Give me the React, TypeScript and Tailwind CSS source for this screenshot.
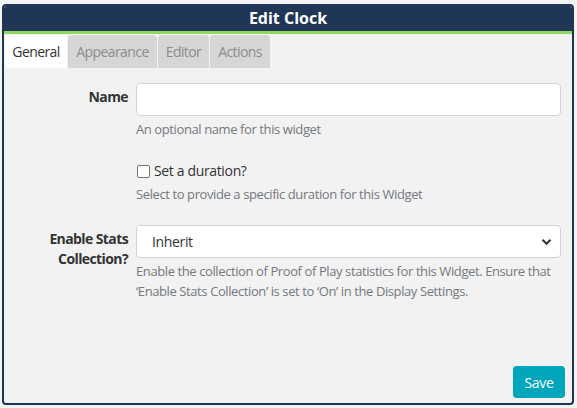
import React from "react";

export default function App() {
  const tabs = [
    { label: "General", w: "w-[62px]", active: true },
    { label: "Appearance", w: "w-[89px]", active: false },
    { label: "Editor", w: "w-[51px]", active: false },
    { label: "Actions", w: "w-[60px]", active: false },
  ];
  return (
    <div className="w-[577px] h-[408px] bg-[#f3f3f3] pt-[4px] pl-[2px]" style={{ fontFamily: '"Open Sans", "Noto Sans", sans-serif' }}>
      <div className="w-[572px] h-[401px] border-2 border-[#1f3657] rounded-[4px] bg-[#f2f2f2] flex flex-col overflow-hidden">
        <div className="h-[28px] bg-[#1f3657] border-b-[3px] border-[#8cd962] flex items-center justify-center shrink-0">
          <span className="text-white font-bold text-[16px] leading-none -mt-[2px]">Edit Clock</span>
        </div>
        <div className="flex gap-[1px] pl-[1px] pt-[1px] shrink-0">
          {tabs.map((t) => (
            <div
              key={t.label}
              className={`${t.w} h-[33px] rounded-t-[4px] flex items-center justify-center text-[14px] tracking-[-0.6px] ${
                t.active ? "bg-white text-[#333]" : "bg-[#d6d6d6] text-[#8c8c8c]"
              }`}
            >
              {t.label}
            </div>
          ))}
        </div>
        <div className="pt-[15px] pr-[11px] grid grid-cols-[124px_1fr] gap-x-[8px] text-[14px] text-[#333]">
          <div className="text-right font-bold pt-[4px] leading-[20px] tracking-[-0.6px]">Name</div>
          <div>
            <div className="h-[33px] bg-white border border-[#ced4da] rounded-[4px]" />
            <div className="mt-[3px] text-[13px] leading-[20px] text-[#74797e] tracking-[-0.4px]">An optional name for this widget</div>
          </div>

          <div />
          <div className="mt-[22px]">
            <label className="flex items-center h-[20px] leading-[20px]">
              <span className="w-[13px] h-[13px] ml-[1px] border border-[#767676] rounded-[2px] bg-white inline-block" />
              <span className="ml-[4px] tracking-[-0.35px]">Set a duration?</span>
            </label>
            <div className="mt-[3px] text-[13px] leading-[20px] text-[#74797e] tracking-[-0.4px]">Select to provide a specific duration for this Widget</div>
          </div>

          <div className="text-right font-bold pt-[25px] leading-[20px] tracking-[-0.6px]">
            Enable Stats
            <br />
            Collection?
          </div>
          <div className="mt-[21px]">
            <div className="h-[33px] bg-white border border-[#ced4da] rounded-[4px] flex items-center justify-between pl-[15px] pr-[8px]">
              <span className="text-[14px] text-[#333] tracking-[-0.35px]">Inherit</span>
              <svg width="11" height="8" viewBox="0 0 11 8">
                <path d="M1.5 1.8 L5.5 5.8 L9.5 1.8" fill="none" stroke="#343a40" strokeWidth="2.2" />
              </svg>
            </div>
            <div className="mt-[3px] text-[13px] leading-[20px] text-[#74797e] tracking-[-0.4px]">
              Enable the collection of Proof of Play statistics for this Widget. Ensure that ‘Enable Stats Collection’ is set to ‘On’ in the Display Settings.
            </div>
          </div>
        </div>
        <div className="flex-1" />
        <div className="flex justify-end pr-[7px] pb-[5px]">
          <button className="w-[52px] h-[32px] rounded-[4px] bg-[#00a6bb] text-white text-[14px] tracking-[-0.35px]">Save</button>
        </div>
      </div>
    </div>
  );
}
